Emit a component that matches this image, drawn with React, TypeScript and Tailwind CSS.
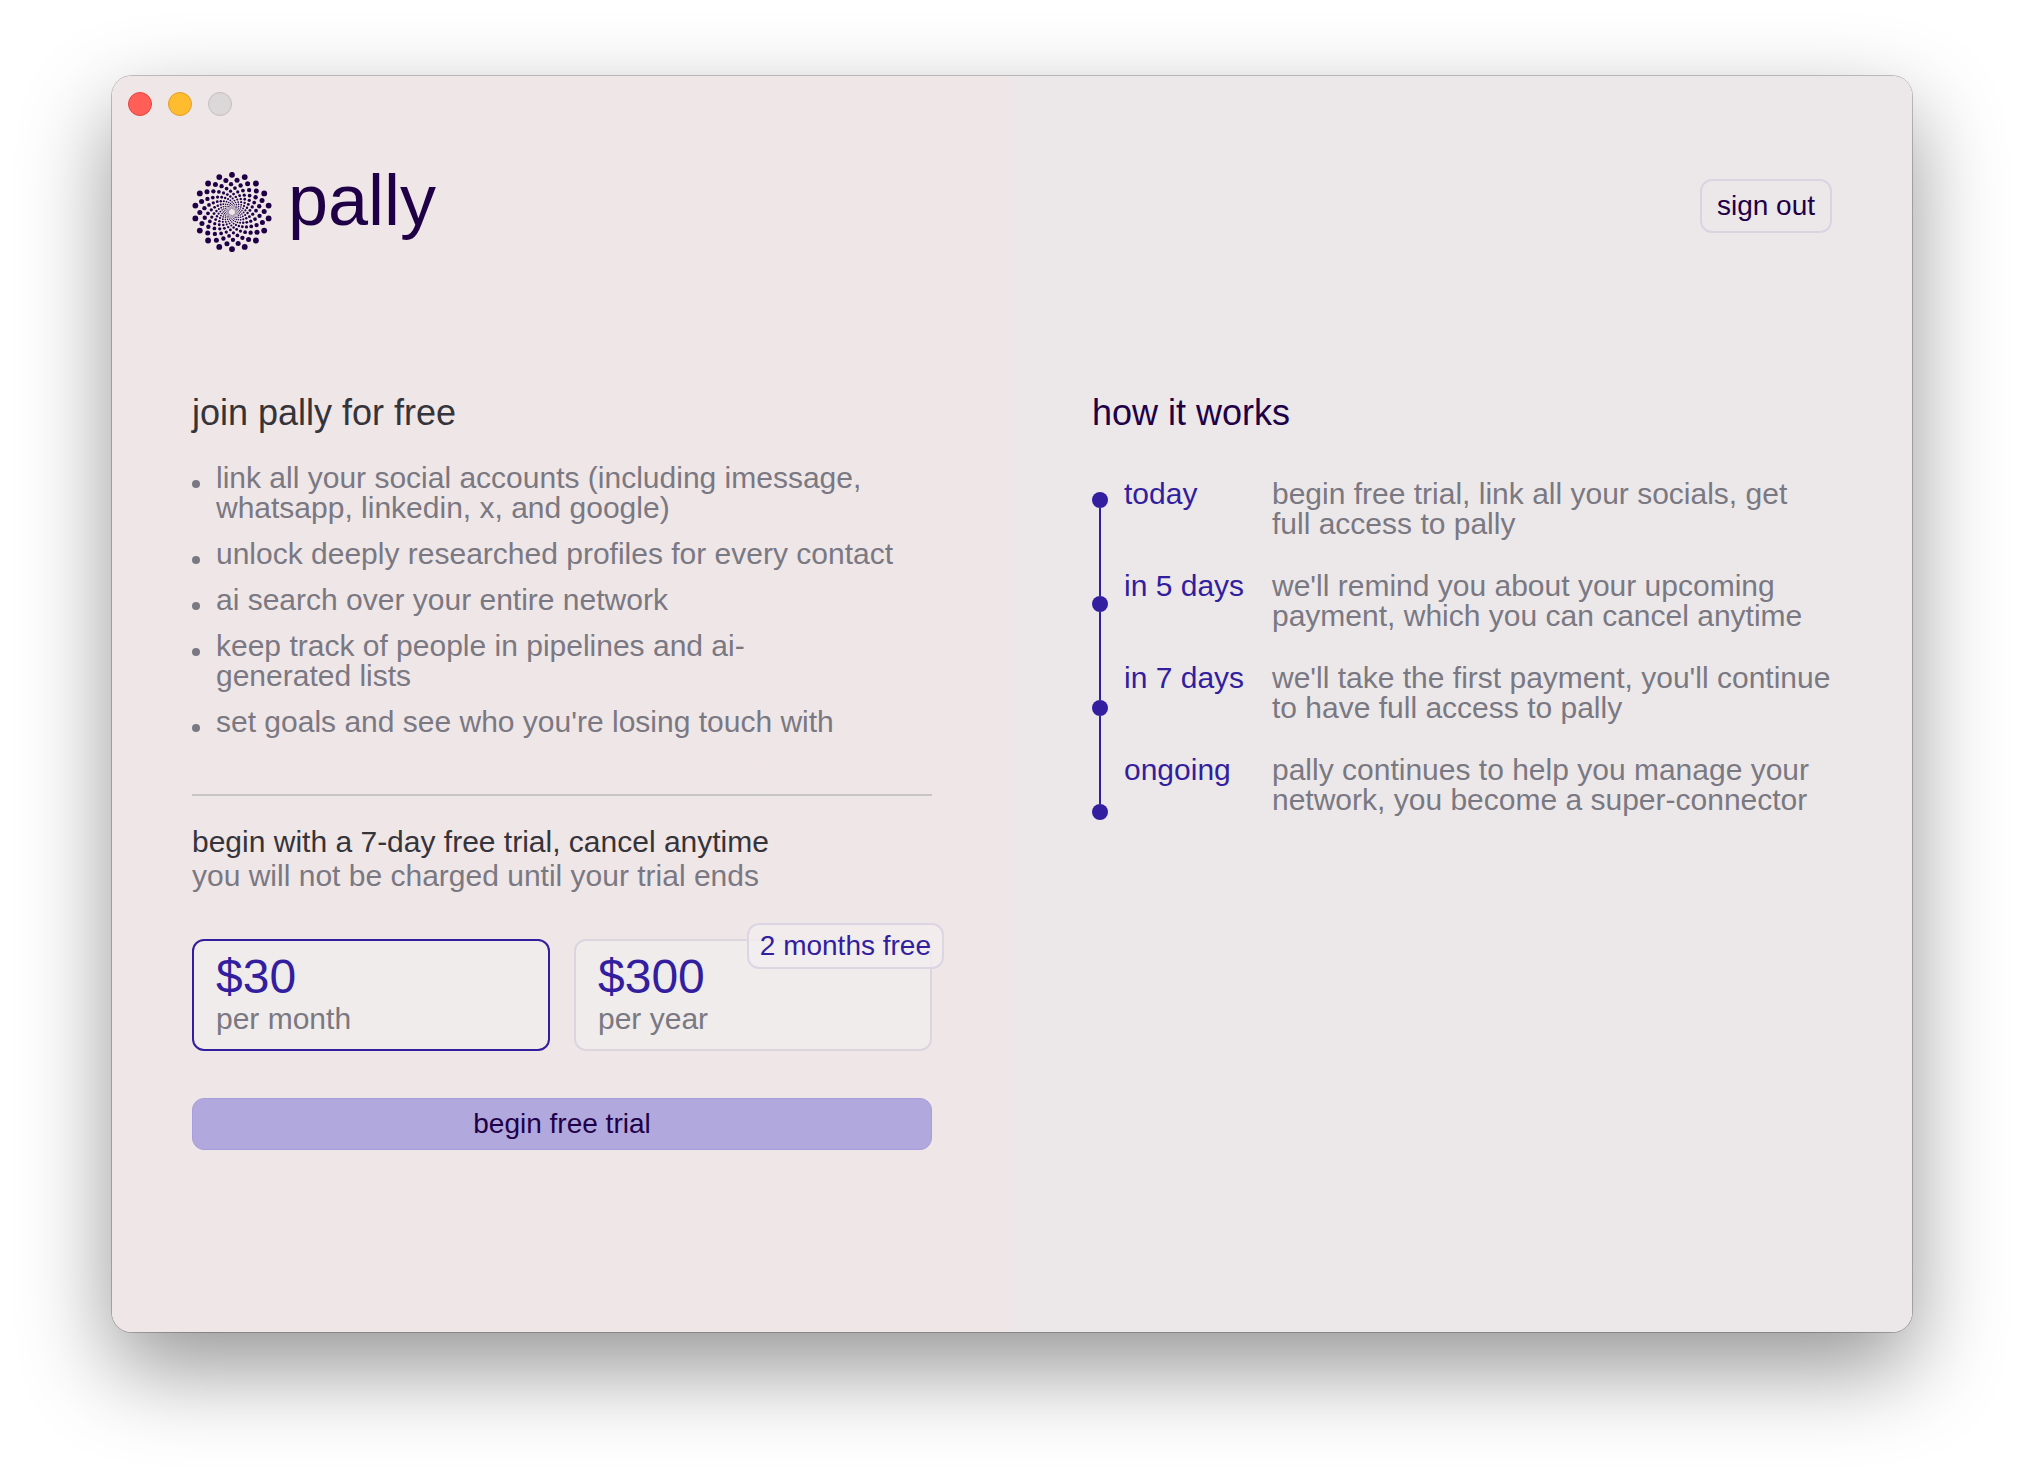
import { useState } from "react"

const features = [
  "link all your social accounts (including imessage, whatsapp, linkedin, x, and google)",
  "unlock deeply researched profiles for every contact",
  "ai search over your entire network",
  "keep track of people in pipelines and ai-generated lists",
  "set goals and see who you're losing touch with",
]

const steps = [
  { when: "today", what: "begin free trial, link all your socials, get full access to pally" },
  { when: "in 5 days", what: "we'll remind you about your upcoming payment, which you can cancel anytime" },
  { when: "in 7 days", what: "we'll take the first payment, you'll continue to have full access to pally" },
  { when: "ongoing", what: "pally continues to help you manage your network, you become a super-connector" },
]

const plans = [
  { id: "monthly", price: "$30", period: "per month", badge: "" },
  { id: "yearly", price: "$300", period: "per year", badge: "2 months free" },
]

const ARMS = 18
const RINGS = 18

// each ring is a smaller copy of the one outside it, turned by 9 degrees
function Logo() {
  const dots = []
  for (let ring = 0; ring < RINGS; ring++) {
    const scale = Math.pow(0.865, ring)
    for (let arm = 0; arm < ARMS; arm++) {
      const angle = ((arm * 20 + ring * 9) * Math.PI) / 180
      dots.push(
        <circle
          key={`${ring}-${arm}`}
          cx={40 + Math.sin(angle) * 37.2 * scale}
          cy={40 - Math.cos(angle) * 37.2 * scale}
          r={2.9 * scale}
        />
      )
    }
  }
  return (
    <svg viewBox="0 0 80 80" className="size-20 fill-[#1f0047]" aria-hidden="true">
      {dots}
    </svg>
  )
}

function TrafficLights() {
  return (
    <div className="flex gap-4 px-4 pt-4">
      <span className="size-6 rounded-full border border-[#e2463f] bg-[#ff5f57]" />
      <span className="size-6 rounded-full border border-[#e0a028] bg-[#febc2e]" />
      <span className="size-6 rounded-full border border-[#c3bfc0] bg-[#dcd7d8]" />
    </div>
  )
}

function Timeline() {
  return (
    <div className="flex gap-4">
      <div className="flex flex-col items-center pt-[13px]">
        {steps.map((step, i) => (
          <div key={step.when} className="flex flex-col items-center">
            {i > 0 && <span className="h-22 w-0.5 bg-[#321e9e]" />}
            <span className="size-4 rounded-full bg-[#321e9e]" />
          </div>
        ))}
      </div>
      <dl className="flex flex-1 flex-col gap-8 text-[30px] leading-none">
        {steps.map((step) => (
          <div key={step.when} className="flex">
            <dt className="w-37 shrink-0 text-[#321e9e]">{step.when}</dt>
            <dd className="flex-1">{step.what}</dd>
          </div>
        ))}
      </dl>
    </div>
  )
}

export default function App() {
  const [plan, setPlan] = useState("monthly")

  return (
    <div className="min-h-screen bg-white px-28 pt-19 pb-37 font-['Liberation_Sans',Arial,sans-serif]">
      <main className="flex min-h-[calc(100vh-224px)] flex-col rounded-[20px] bg-linear-to-r from-[#efe6e7] from-50% to-[#ece8e9] to-50% text-[#7a7882] shadow-[0_0_0_1px_rgba(0,0,0,0.22),0_36px_90px_rgba(0,0,0,0.42)]">
        <TrafficLights />
        <header className="flex items-center justify-between px-20 pt-11">
          <div className="flex items-center gap-4 pt-3">
            <Logo />
            <span className="-mt-6 text-[72px] leading-20 text-[#1f0047]">pally</span>
          </div>
          <button className="rounded-xl border-2 border-[#d9d4e2] px-[15px] py-[11px] text-[28px] leading-7 text-[#1f0047]">sign out</button>
        </header>

        <div className="grid grid-cols-2 pt-[143px]">
          <section className="px-20">
            <h1 className="text-[36px] leading-9 text-[#35343a]">join pally for free</h1>
            <ul className="mt-8 flex flex-col gap-4 text-[30px] leading-none text-pretty">
              {features.map((feature) => (
                <li key={feature} className="flex gap-4">
                  <span className="mt-[17px] size-2 shrink-0 rounded-full bg-[#7a7882]" />
                  {feature}
                </li>
              ))}
            </ul>
            <hr className="mt-[57px] border-t-2 border-[#c8c5c6]" />
            <p className="mt-[31px] text-[30px] leading-none text-[#35343a]">begin with a 7-day free trial, cancel anytime</p>
            <p className="mt-1 text-[30px] leading-none">you will not be charged until your trial ends</p>
            <div className="mt-12 flex gap-6">
              {plans.map((p) => (
                <button
                  key={p.id}
                  aria-pressed={plan === p.id}
                  onClick={() => setPlan(p.id)}
                  className={`relative flex-1 rounded-xl border-2 bg-[#f0eceb] px-[22px] py-3 text-left ${plan === p.id ? "border-[#321e9e]" : "border-[#dcd5e0]"}`}
                >
                  <span className="block text-[48px] leading-12 text-[#321e9e]">{p.price}</span>
                  <span className="block text-[30px] leading-9">{p.period}</span>
                  {p.badge && (
                    <span className="absolute -top-[18px] -right-[14px] rounded-xl border-2 border-[#dcd5e4] bg-[#f2eeef]/80 px-[11px] py-[7px] text-[28px] leading-7 text-[#321e9e]">
                      {p.badge}
                    </span>
                  )}
                </button>
              ))}
            </div>
            <button className="mt-[47px] w-full rounded-xl border border-[#a79dda] bg-[#b1a8de] py-[11px] text-[28px] leading-7 text-[#1f0047]">
              begin free trial
            </button>
          </section>

          <section className="px-20">
            <h2 className="text-[36px] leading-9 text-[#1f0047]">how it works</h2>
            <div className="mt-12">
              <Timeline />
            </div>
          </section>
        </div>
      </main>
    </div>
  )
}
